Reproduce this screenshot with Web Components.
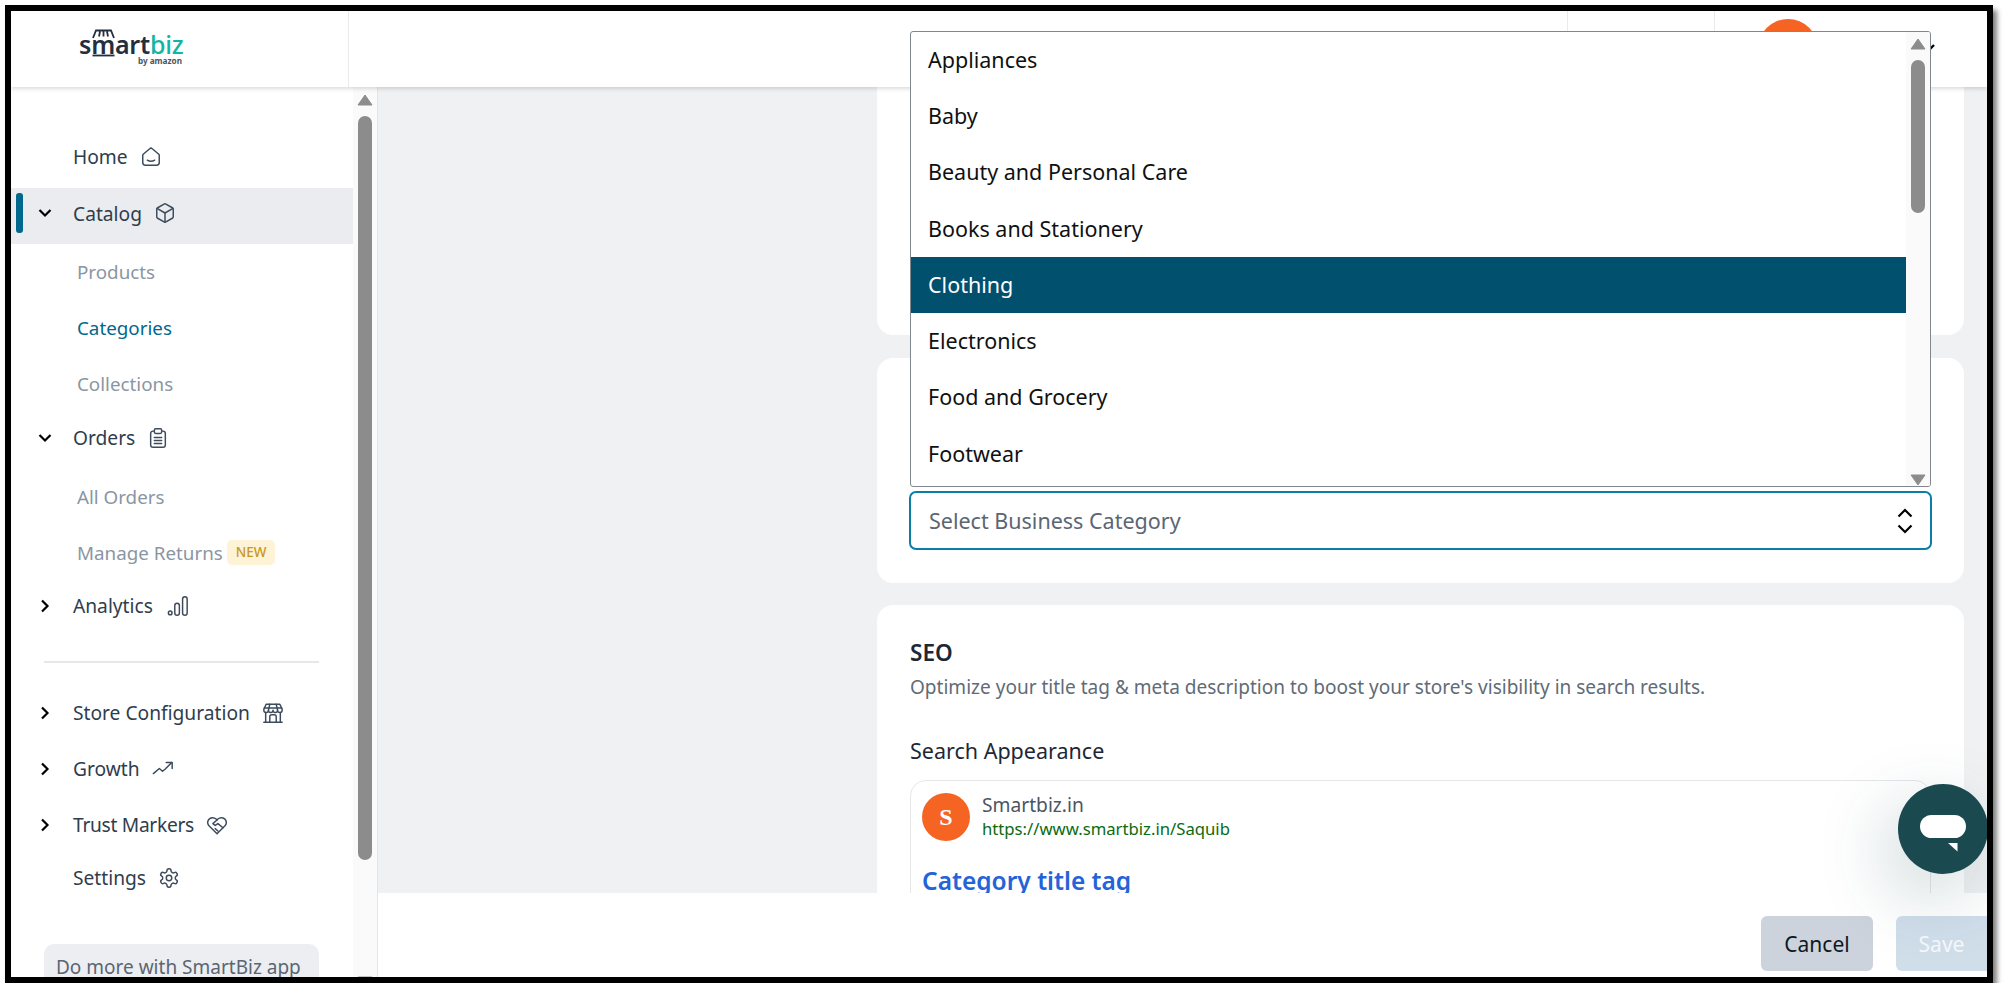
<!DOCTYPE html>
<html>
<head>
<meta charset="utf-8">
<title>SmartBiz</title>
<style>
    html, body { margin: 0; padding: 0; background: #fff; overflow: hidden; }
    body { font-family: "Noto Sans", "Open Sans", sans-serif; color: #232f3e; }
</style>
</head>
<body>
<sb-frame>
    <sb-header slot="header"></sb-header>
    <sb-sidebar slot="sidebar">
        <sb-nav-item icon="home" style="margin-top:44px">Home</sb-nav-item>
        <sb-nav-item icon="box" chevron="down" active style="margin-top:5px">Catalog</sb-nav-item>
        <sb-sub-item>Products</sb-sub-item>
        <sb-sub-item current>Categories</sb-sub-item>
        <sb-sub-item>Collections</sb-sub-item>
        <sb-nav-item icon="clipboard" chevron="down">Orders</sb-nav-item>
        <sb-sub-item style="margin-top:5px">All Orders</sb-sub-item>
        <sb-sub-item badge="NEW">Manage Returns</sb-sub-item>
        <sb-nav-item icon="chart" chevron="right" gap="14" style="margin-top:-1px">Analytics</sb-nav-item>
        <sb-divider></sb-divider>
        <sb-nav-item icon="store" chevron="right" style="margin-top:24px">Store Configuration</sb-nav-item>
        <sb-nav-item icon="growth" chevron="right" style="margin-top:4px">Growth</sb-nav-item>
        <sb-nav-item icon="trust" chevron="right" style="margin-top:4px;letter-spacing:-0.3px">Trust Markers</sb-nav-item>
        <sb-nav-item icon="gear" style="margin-top:1px">Settings</sb-nav-item>
        <sb-app-card>Do more with SmartBiz app</sb-app-card>
    </sb-sidebar>
    <sb-main slot="main">
        <sb-card style="height:248px;border-radius:0 0 16px 16px"></sb-card>
        <sb-card style="height:225px;margin-top:23px;padding-left:32px;padding-right:32px;justify-content:flex-end;padding-bottom:33px">
            <sb-select>Select Business Category</sb-select>
        </sb-card>
        <sb-card style="margin-top:22px;flex:1;padding-top:33px">
            <sb-seo></sb-seo>
        </sb-card>
        <sb-footer slot="footer"></sb-footer>
    </sb-main>
    <sb-listbox slot="overlay">
        <sb-option>Appliances</sb-option>
        <sb-option>Baby</sb-option>
        <sb-option>Beauty and Personal Care</sb-option>
        <sb-option>Books and Stationery</sb-option>
        <sb-option selected>Clothing</sb-option>
        <sb-option>Electronics</sb-option>
        <sb-option>Food and Grocery</sb-option>
        <sb-option>Footwear</sb-option>
    </sb-listbox>
    <sb-chat slot="overlay"></sb-chat>
</sb-frame>

<script>
const ICONS = {
    home: '<path d="M3.5 9 10.6 3a2 2 0 0 1 2.8 0L20.5 9a2 2 0 0 1 .5 1.4V18a3 3 0 0 1-3 3H6a3 3 0 0 1-3-3v-7.600A2 2 0 0 1 3.500 9z"/><path d="M8 15.500q4 2.500 8 0"/>',
    box: '<path d="M21 8a2 2 0 0 0-1-1.730l-7-4a2 2 0 0 0-2 0l-7 4A2 2 0 0 0 3 8v8a2 2 0 0 0 1 1.730l7 4a2 2 0 0 0 2 0l7-4A2 2 0 0 0 21 16Z"/><path d="m3.300 7 8.700 5 8.700-5"/><path d="M12 22V12"/>',
    clipboard: '<path d="M8 4.500H6.500A2.500 2.500 0 0 0 4 7v12.500A2.500 2.500 0 0 0 6.500 22h11a2.500 2.500 0 0 0 2.500-2.500V7a2.500 2.500 0 0 0-2.500-2.500H16"/><rect x="8" y="2" width="8" height="5" rx="1.500"/><path d="M8 11.500h8M8 14.700h8M8 18h8"/>',
    chart: '<circle cx="3.500" cy="19.500" r="2"/><rect x="8.500" y="9" width="5" height="13" rx="2.500"/><rect x="17" y="2" width="5" height="20" rx="2.500"/>',
    store: '<path d="M4.500 2.500h15L22 8v1a2.500 2.500 0 0 1-5 0 2.500 2.500 0 0 1-5 0 2.500 2.500 0 0 1-5 0 2.500 2.500 0 0 1-5 0V8z"/><path d="M2.500 6.500h19M8.500 2.500 7 9M15.500 2.500 17 9"/><path d="M4 11.500V22M20 11.500V22M2 22h20"/><path d="M8.500 22v-6a2 2 0 0 1 2-2h3a2 2 0 0 1 2 2v6"/>',
    growth: '<path d="M1.500 17 8 11.500l3.500 3 3-2.500 7-7"/><path d="M15.500 5h6.500v6.500"/>',
    trust: '<path d="M12 21.500 3 12.500a5.500 5.500 0 0 1 0-6.500 5.500 5.500 0 0 1 8-.5l1 1 1-1a5.500 5.500 0 0 1 8 .5 5.500 5.500 0 0 1 0 6.500z"/><path d="M12 6.500 7.500 10.500l2.500 2 3-2 5.500 4.500M13 18.500l-3-2.500"/>',
    gear: '<path d="M12.220 2h-.44a2 2 0 0 0-2 2v.18a2 2 0 0 1-1 1.730l-.43.25a2 2 0 0 1-2 0l-.15-.08a2 2 0 0 0-2.730.73l-.22.38a2 2 0 0 0 .73 2.730l.15.1a2 2 0 0 1 1 1.720v.51a2 2 0 0 1-1 1.740l-.15.09a2 2 0 0 0-.73 2.730l.22.38a2 2 0 0 0 2.730.73l.15-.08a2 2 0 0 1 2 0l.43.25a2 2 0 0 1 1 1.730V20a2 2 0 0 0 2 2h.44a2 2 0 0 0 2-2v-.18a2 2 0 0 1 1-1.730l.43-.25a2 2 0 0 1 2 0l.15.08a2 2 0 0 0 2.730-.73l.22-.39a2 2 0 0 0-.73-2.730l-.15-.08a2 2 0 0 1-1-1.740v-.5a2 2 0 0 1 1-1.740l.15-.09a2 2 0 0 0 .73-2.730l-.22-.38a2 2 0 0 0-2.730-.73l-.15.08a2 2 0 0 1-2 0l-.43-.25a2 2 0 0 1-1-1.730V4a2 2 0 0 0-2-2z"/><circle cx="12" cy="12" r="3"/>'
};

const CHEVRONS = {
    down: '<svg width="14" height="10" viewBox="0 0 14 10"><path d="M1.500 2 7 7.500 12.500 2" fill="none" stroke="#000" stroke-width="2.200"/></svg>',
    right: '<svg width="10" height="14" viewBox="0 0 10 14"><path d="M2 1.500 7.500 7 2 12.500" fill="none" stroke="#000" stroke-width="2.200"/></svg>'
};

// small helper, every element here is just a shadow root with fixed markup
function shadow(el, html) {
    el.attachShadow({ mode: 'open' }).innerHTML = html;
}

class SbFrame extends HTMLElement {
    constructor() {
        super();
        shadow(this, `
        <style>
            :host {
                display: block;
                box-sizing: border-box;
                position: relative;
                width: 1988px;
                height: 978px;
                margin: 5px 0 0 5px;
                border: 6px solid #000;
                background: #fff;
                box-shadow: 4px 5px 5px rgba(0,0,0,0.5);
                overflow: hidden;
            }
            .layout { display: flex; flex-direction: column; height: 100%; }
            .body { display: flex; flex: 1; min-height: 0; }
        </style>
        <div class="layout">
            <slot name="header"></slot>
            <div class="body">
                <slot name="sidebar"></slot>
                <slot name="main"></slot>
            </div>
        </div>
        <slot name="overlay"></slot>
        `);
    }
}

class SbHeader extends HTMLElement {
    constructor() {
        super();
        shadow(this, `
        <style>
            :host {
                display: flex;
                position: relative;
                z-index: 2;
                height: 76px;
                flex: none;
                background: #fff;
                box-shadow: 0 2px 4px rgba(0,0,0,0.14);
            }
            .logo-cell { box-sizing: border-box; width: 338px; border-right: 1px solid #e8eaec; padding: 21px 0 0 68px; }
            .spacer { flex: 1; }
            .cell { box-sizing: border-box; width: 147px; border-left: 1px solid #e8eaec; }
            .user { box-sizing: border-box; width: 273px; border-left: 1px solid #e8eaec; padding: 8px 0 0 43px; display: flex; align-items: flex-start; }
            .avatar { width: 60px; height: 60px; border-radius: 50%; background: #f56423; }
            .caret { margin: 24px 0 0 100px; }
            .logo { position: relative; width: 110px; line-height: 1; }
            .word { font: 600 25px/24px "Noto Sans", sans-serif; color: #232f3e; letter-spacing: -0.2px; display: block; }
            .word b { font-weight: 500; color: #12b5a5; }
            .by { display: block; text-align: right; width: 103px; font: 700 8.200px/10px "Noto Sans", sans-serif; color: #4a5561; }
            .awning { position: absolute; left: 13px; top: -3px; }
        </style>
        <div class="logo-cell">
            <div class="logo">
                <span class="word">smart<b>biz</b></span>
                <span class="by">by amazon</span>
                <svg class="awning" width="23" height="28" viewBox="0 0 23 28" fill="none" stroke="#232f3e" stroke-width="1.800">
                    <path d="M1 9 4 1.500h15L22 9M8 2.500 7 7.500M11.500 2.500v5M15 2.500l1 5"/>
                    <path d="M0.500 26.500h22"/>
                </svg>
            </div>
        </div>
        <div class="spacer"></div>
        <div class="cell"></div>
        <div class="user">
            <div class="avatar"></div>
            <svg class="caret" width="20" height="12" viewBox="0 0 20 12"><path d="M2 2l7 7 7-7" fill="none" stroke="#000" stroke-width="2.400"/></svg>
        </div>
        `);
    }
}

class SbScrollbar extends HTMLElement {
    static get observedAttributes() {
        return ['top', 'thumb', 'gap'];
    }
    constructor() {
        super();
        shadow(this, `
        <style>
            :host { display: flex; flex-direction: column; align-items: center; box-sizing: border-box; width: 24px; flex: none; height: 100%; background: #fafafa; }
            .thumb { width: 14px; border-radius: 7px; background: #8c8c8c; }
            .grow { flex: 1; }
            svg { display: block; flex: none; }
        </style>
        <svg id="up" width="16" height="12" viewBox="0 0 16 12"><path d="M8 1 15 11H1Z" fill="#8c8c8c" stroke="#8c8c8c" stroke-linejoin="round"/></svg>
        <div class="thumb" id="thumb"></div>
        <div class="grow"></div>
        <svg id="down" width="16" height="12" viewBox="0 0 16 12"><path d="M8 11 15 1H1Z" fill="#8c8c8c" stroke="#8c8c8c" stroke-linejoin="round"/></svg>
        `);
    }
    attributeChangedCallback(attrName, oldVal, newVal) {
        const root = this.shadowRoot;
        if (attrName == 'top') root.getElementById('up').style.marginTop = newVal + 'px';
        if (attrName == 'gap') root.getElementById('thumb').style.marginTop = newVal + 'px';
        if (attrName == 'thumb') root.getElementById('thumb').style.height = newVal + 'px';
    }
}

class SbSidebar extends HTMLElement {
    constructor() {
        super();
        shadow(this, `
        <style>
            :host { display: flex; width: 366px; flex: none; height: 100%; border-right: 1px solid #e3e5e8; box-sizing: content-box; overflow: hidden; }
            .nav { width: 342px; flex: none; display: flex; flex-direction: column; overflow: hidden; }
            .bar { height: 901px; }
        </style>
        <div class="nav"><slot></slot></div>
        <sb-scrollbar class="bar" top="7" gap="10" thumb="744"></sb-scrollbar>
        `);
    }
}

class SbNavItem extends HTMLElement {
    constructor() {
        super();
        const icon = ICONS[this.getAttribute('icon')] || '';
        const chevron = CHEVRONS[this.getAttribute('chevron')] || '';
        const gap = this.getAttribute('gap') || 12;
        shadow(this, `
        <style>
            :host {
                display: flex;
                align-items: center;
                position: relative;
                flex: none;
                box-sizing: border-box;
                height: 52px;
                padding-bottom: 1px;
                font: 400 19.200px "Noto Sans", sans-serif;
                color: #2f3d4d;
            }
            :host([active]) { height: 56px; padding-bottom: 6px; background: #eaecef; }
            .chev { width: 62px; flex: none; padding-left: 20px; box-sizing: border-box; display: flex; justify-content: center; padding-right: 15px; }
            .mark { display: none; position: absolute; left: 5px; top: 5px; width: 7px; height: 40px; border-radius: 3px; background: #00688d; }
            :host([active]) .mark { display: block; }
            svg.ic { margin-left: ${gap}px; width: 22px; height: 22px; fill: none; stroke: #3d4b5c; stroke-width: 1.600; stroke-linecap: round; stroke-linejoin: round; }
        </style>
        <div class="mark"></div>
        <div class="chev">${chevron}</div>
        <slot></slot>
        <svg class="ic" viewBox="0 0 24 24">${icon}</svg>
        `);
    }
}

class SbSubItem extends HTMLElement {
    constructor() {
        super();
        const badge = this.getAttribute('badge');
        shadow(this, `
        <style>
            :host {
                display: flex;
                align-items: center;
                flex: none;
                box-sizing: border-box;
                height: 56px;
                padding-left: 66px;
                padding-bottom: 1px;
                font: 400 18.800px "Noto Sans", sans-serif;
                color: #8a96a3;
            }
            :host([current]) { color: #00688d; }
            .badge { margin-left: 4px; padding: 0 9px; height: 25px; line-height: 25px; border-radius: 5px; background: #fef3d6; color: #c9981a; font-size: 13.500px; font-weight: 500; }
        </style>
        <slot></slot>
        ${badge ? `<span class="badge">${badge}</span>` : ''}
        `);
    }
}

class SbDivider extends HTMLElement {
    constructor() {
        super();
        shadow(this, `
        <style>
            :host { display: block; flex: none; height: 2px; width: 275px; margin: 29px 0 0 33px; background: #e5e7ea; }
        </style>
        `);
    }
}

class SbAppCard extends HTMLElement {
    constructor() {
        super();
        shadow(this, `
        <style>
            :host {
                display: block;
                flex: none;
                box-sizing: border-box;
                width: 275px;
                height: 34px;
                margin: 40px 0 0 33px;
                padding: 11px 12px 0;
                border-radius: 10px 10px 0 0;
                background: #eceef1;
                font: 400 19px/24px "Noto Sans", sans-serif;
                color: #5a6673;
                white-space: nowrap;
            }
        </style>
        <slot></slot>
        `);
    }
}

class SbMain extends HTMLElement {
    constructor() {
        super();
        shadow(this, `
        <style>
            :host { display: flex; flex-direction: column; flex: 1; min-width: 0; height: 100%; }
            .scroller {
                display: flex;
                flex-direction: column;
                box-sizing: border-box;
                height: 806px;
                padding: 0 23px 0 499px;
                background: #f0f1f3;
                overflow: hidden;
            }
        </style>
        <div class="scroller"><slot></slot></div>
        <slot name="footer"></slot>
        `);
    }
}

class SbCard extends HTMLElement {
    constructor() {
        super();
        shadow(this, `
        <style>
            :host {
                display: flex;
                flex-direction: column;
                flex: none;
                box-sizing: border-box;
                background: #fff;
                border-radius: 16px;
            }
        </style>
        <slot></slot>
        `);
    }
}

class SbSelect extends HTMLElement {
    constructor() {
        super();
        shadow(this, `
        <style>
            :host {
                display: flex;
                align-items: center;
                justify-content: space-between;
                box-sizing: border-box;
                height: 59px;
                padding: 0 17px 0 18px;
                border: 2px solid #0b7ea8;
                border-radius: 7px;
                background: #fff;
                font: 400 21.500px "Noto Sans", sans-serif;
                color: #5b6672;
            }
        </style>
        <slot></slot>
        <svg width="16" height="26" viewBox="0 0 16 26" fill="none" stroke="#000" stroke-width="2.200">
            <path d="M1.500 8.500 8 2l6.500 6.500M1.500 17.500 8 24l6.500-6.500"/>
        </svg>
        `);
    }
}

class SbSeo extends HTMLElement {
    constructor() {
        super();
        shadow(this, `
        <style>
            :host { display: block; padding: 0 33px; }
            h2 { margin: 0; font: 600 22.500px/30px "Noto Sans", sans-serif; color: #1c2836; }
            p { margin: 4px 0 0; font: 400 19.050px/30px "Noto Sans", sans-serif; color: #5f6b76; white-space: nowrap; }
            h3 { margin: 33px 0 0; font: 400 21.500px/32px "Noto Sans", sans-serif; color: #1c2836; }
            .box { margin-top: 13px; height: 200px; box-sizing: border-box; padding: 12px 11px; border: 1px solid #e5e7ea; border-radius: 16px; }
            .site { display: flex; align-items: center; gap: 12px; }
            .fav { width: 48px; height: 48px; border-radius: 50%; background: #f56423; color: #fff; font: 700 24px/48px "Liberation Serif", serif; text-align: center; flex: none; }
            .name { font: 400 19.200px/24px "Noto Sans", sans-serif; color: #4b5563; }
            .url { font: 400 16.700px/24px "Noto Sans", sans-serif; color: #0a6b12; }
            .title { margin-top: 23px; font: 600 24.500px/34px "Noto Sans", sans-serif; color: #2563d8; }
        </style>
        <h2>SEO</h2>
        <p>Optimize your title tag &amp; meta description to boost your store's visibility in search results.</p>
        <h3>Search Appearance</h3>
        <div class="box">
            <div class="site">
                <div class="fav">S</div>
                <div>
                    <div class="name">Smartbiz.in</div>
                    <div class="url">https://www.smartbiz.in/Saquib</div>
                </div>
            </div>
            <div class="title">Category title tag</div>
        </div>
        `);
    }
}

class SbFooter extends HTMLElement {
    constructor() {
        super();
        shadow(this, `
        <style>
            :host { display: flex; justify-content: flex-end; gap: 23px; flex: 1; box-sizing: border-box; padding-top: 23px; background: #fff; }
            button { height: 55px; border: 0; border-radius: 6px; font: 400 21px "Noto Sans", sans-serif; padding: 0; }
            .cancel { width: 112px; background: #ccd3dc; color: #0f1720; }
            .save { width: 91px; background: #d0deea; color: #f5f8fa; border-radius: 6px 0 0 6px; }
        </style>
        <button class="cancel">Cancel</button>
        <button class="save">Save</button>
        `);
    }
}

class SbListbox extends HTMLElement {
    constructor() {
        super();
        shadow(this, `
        <style>
            :host {
                display: flex;
                position: absolute;
                z-index: 5;
                left: 899px;
                top: 20px;
                box-sizing: border-box;
                width: 1021px;
                height: 456px;
                background: #fff;
                border: 1.500px solid #80878e;
                border-radius: 3px;
                overflow: hidden;
            }
            .list { flex: 1; display: flex; flex-direction: column; }
        </style>
        <div class="list"><slot></slot></div>
        <sb-scrollbar top="6" gap="10" thumb="153"></sb-scrollbar>
        `);
    }
}

class SbOption extends HTMLElement {
    constructor() {
        super();
        shadow(this, `
        <style>
            :host {
                display: flex;
                align-items: center;
                flex: none;
                box-sizing: border-box;
                height: 56.300px;
                padding-left: 17px;
                padding-bottom: 2px;
                font: 400 21.500px "Noto Sans", sans-serif;
                color: #0f1111;
            }
            :host([selected]) { background: #00506e; color: #fff; }
        </style>
        <slot></slot>
        `);
    }
}

class SbChat extends HTMLElement {
    constructor() {
        super();
        shadow(this, `
        <style>
            :host {
                display: block;
                position: absolute;
                z-index: 4;
                left: 1887px;
                top: 773px;
                width: 90px;
                height: 90px;
                border-radius: 50%;
                background: #1a4a50;
                box-shadow: -12px 22px 70px rgba(26,74,80,0.22);
            }
            svg { display: block; }
        </style>
        <svg width="90" height="90" viewBox="0 0 90 90">
            <rect x="22" y="31" width="46" height="23" rx="11.500" fill="#fff"/>
            <path d="M50 59h9.500v8.500Z" fill="#fff"/>
        </svg>
        `);
    }
}

window.customElements.define('sb-scrollbar', SbScrollbar);
window.customElements.define('sb-frame', SbFrame);
window.customElements.define('sb-header', SbHeader);
window.customElements.define('sb-sidebar', SbSidebar);
window.customElements.define('sb-nav-item', SbNavItem);
window.customElements.define('sb-sub-item', SbSubItem);
window.customElements.define('sb-divider', SbDivider);
window.customElements.define('sb-app-card', SbAppCard);
window.customElements.define('sb-main', SbMain);
window.customElements.define('sb-card', SbCard);
window.customElements.define('sb-select', SbSelect);
window.customElements.define('sb-seo', SbSeo);
window.customElements.define('sb-footer', SbFooter);
window.customElements.define('sb-listbox', SbListbox);
window.customElements.define('sb-option', SbOption);
window.customElements.define('sb-chat', SbChat);
</script>
</body>
</html>
